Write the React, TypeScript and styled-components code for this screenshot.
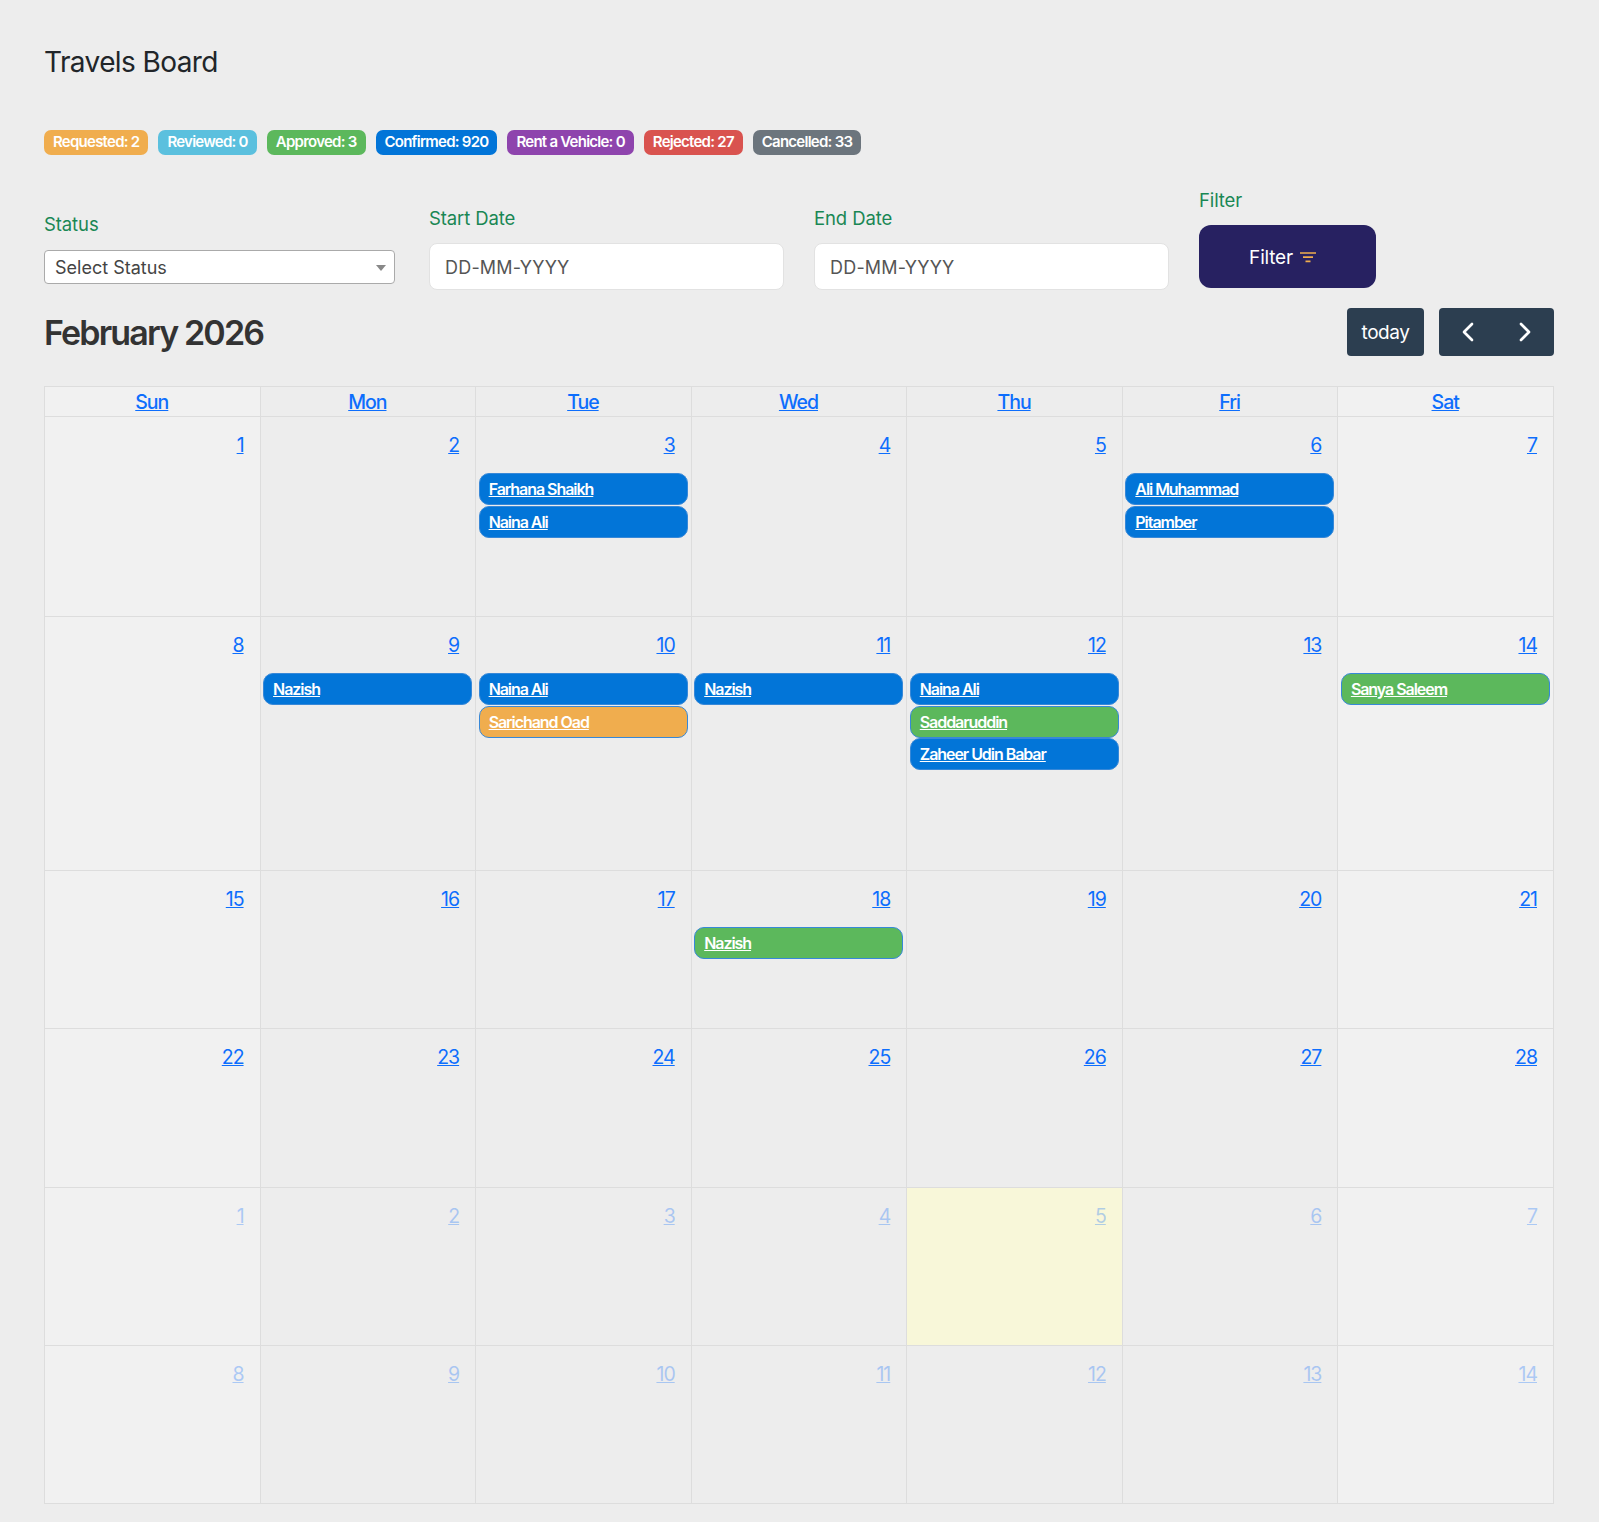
import styled, { createGlobalStyle } from "styled-components";
import { ChevronLeft, ChevronRight } from "lucide-react";

const font = `Inter, "Noto Sans", sans-serif`;

const GlobalStyle = createGlobalStyle`
  html, body {
    margin: 0;
    padding: 0;
    background: #ededed;
  }
  * {
    box-sizing: border-box;
  }
`;

const Page = styled.div`
  height: 1522px;
  padding: 44px 45px 0 44px;
  font-family: ${font};
  color: #212529;
  overflow: hidden;
`;

const Title = styled.h1`
  margin: 0;
  font-size: 28px;
  line-height: 36px;
  font-weight: 400;
  letter-spacing: -0.6px;
`;

const Badges = styled.div`
  display: flex;
  gap: 10px;
  margin-top: 50px;
`;

const Badge = styled.span<{ $bg: string }>`
  height: 25px;
  padding: 0 9px;
  border-radius: 7px;
  background: ${(p) => p.$bg};
  color: #fff;
  font-size: 15px;
  line-height: 24px;
  font-weight: 600;
  letter-spacing: -0.75px;
  white-space: nowrap;
`;

const FilterRow = styled.div`
  display: grid;
  grid-template-columns: 385px 385px 385px 177px;
  align-items: end;
  margin-top: 33px;
`;

const Field = styled.div<{ $drop?: number }>`
  margin-bottom: ${(p) => p.$drop ?? 0}px;
`;

const FieldLabel = styled.label<{ $gap?: number }>`
  display: block;
  margin-bottom: ${(p) => p.$gap ?? 13}px;
  font-size: 18.5px;
  line-height: 24px;
  color: #198754;
  letter-spacing: -0.1px;
`;

const SelectWrap = styled.div`
  position: relative;
  width: 351px;

  &::after {
    content: "";
    position: absolute;
    right: 9px;
    top: 15px;
    border-left: 5px solid transparent;
    border-right: 5px solid transparent;
    border-top: 6px solid #888;
    pointer-events: none;
  }
`;

const Select = styled.select`
  display: block;
  width: 100%;
  height: 34px;
  padding: 0 10px;
  appearance: none;
  background: #fff;
  border: 1px solid #aaa;
  border-radius: 4px;
  font-family: ${font};
  font-size: 18px;
  letter-spacing: 0;
  color: #444;
`;

const DateInput = styled.input`
  display: block;
  width: 355px;
  height: 47px;
  padding: 2px 15px 0;
  background: #fff;
  border: 1px solid #e2e2e2;
  border-radius: 8px;
  font-family: ${font};
  font-size: 18px;
  letter-spacing: 0.2px;
  color: #555;

  &::placeholder {
    color: #555;
    opacity: 1;
  }
`;

const FilterButton = styled.button`
  display: flex;
  align-items: center;
  justify-content: center;
  gap: 7px;
  width: 177px;
  height: 63px;
  padding: 2px 10px 0 0;
  border: none;
  border-radius: 12px;
  background: #272161;
  color: #fff;
  font-family: ${font};
  font-size: 19px;
  letter-spacing: -0.2px;
`;

const Toolbar = styled.div`
  display: flex;
  align-items: center;
  justify-content: space-between;
  margin-top: 18px;
  height: 48px;
`;

const MonthTitle = styled.h2`
  margin: 0;
  padding-top: 2px;
  font-size: 34px;
  line-height: 48px;
  font-weight: 600;
  letter-spacing: -1.85px;
  color: #333;
`;

const ToolbarActions = styled.div`
  display: flex;
  gap: 15px;
`;

const ToolButton = styled.button`
  display: flex;
  align-items: center;
  justify-content: center;
  height: 48px;
  min-width: 77px;
  border: none;
  border-radius: 4px;
  background: #2c3e50;
  color: #fff;
  font-family: ${font};
  font-size: 19px;
  letter-spacing: -0.45px;
`;

const NavGroup = styled.div`
  display: flex;
  width: 115px;
  height: 48px;
  border-radius: 4px;
  background: #2c3e50;
`;

const NavButton = styled.button`
  flex: 1;
  display: flex;
  align-items: center;
  justify-content: center;
  border: none;
  background: none;
  color: #fff;
  padding: 0;
`;

const CalendarTable = styled.table`
  width: 1510px;
  margin-top: 30px;
  border-collapse: collapse;
  table-layout: fixed;
`;

const HeadCell = styled.th<{ $weekend?: boolean }>`
  height: 30px;
  padding: 0 1px 0 0;
  border: 1px solid #ddd;
  background: ${(p) => (p.$weekend ? "#f1f1f1" : "#ededed")};
  font-size: 19.5px;
  line-height: 24px;
  font-weight: 500;
  text-align: center;
`;

const Row = styled.tr<{ $height: number }>`
  height: ${(p) => p.$height}px;
`;

const DayCell = styled.td<{ $weekend?: boolean; $today?: boolean }>`
  padding: 0;
  vertical-align: top;
  border: 1px solid #ddd;
  background: ${(p) =>
    p.$today ? "#f8f7d9" : p.$weekend ? "#f1f1f1" : "#ededed"};
`;

const CalLink = styled.a`
  color: #0d6efd;
  text-decoration: underline;
  letter-spacing: -1px;
`;

const DayTop = styled.div<{ $muted?: boolean }>`
  height: 56px;
  padding: 14px 16px 0 0;
  text-align: right;
  font-size: 19.5px;
  line-height: 28px;
  opacity: ${(p) => (p.$muted ? 0.3 : 1)};
`;

const EventBar = styled.a<{ $bg: string }>`
  display: block;
  height: 32px;
  margin: 0 3px 0.65px 2.5px;
  padding: 0 9px;
  border: 1px solid #3788d8;
  border-radius: 10px;
  background: ${(p) => p.$bg};
  color: #fff;
  font-size: 16px;
  line-height: 30px;
  font-weight: 600;
  letter-spacing: -1.05px;
  text-decoration: underline;
  white-space: nowrap;
  overflow: hidden;
`;

const blue = "#0275d8";
const green = "#5cb85c";
const orange = "#f0ad4e";

const badges = [
  { label: "Requested: 2", bg: orange },
  { label: "Reviewed: 0", bg: "#5bc0de" },
  { label: "Approved: 3", bg: green },
  { label: "Confirmed: 920", bg: blue },
  { label: "Rent a Vehicle: 0", bg: "#8e44ad" },
  { label: "Rejected: 27", bg: "#d9534f" },
  { label: "Cancelled: 33", bg: "#6c757d" },
];

const weekdays = ["Sun", "Mon", "Tue", "Wed", "Thu", "Fri", "Sat"];

type CalEvent = { name: string; bg: string };

const events: Record<number, CalEvent[]> = {
  3: [
    { name: "Farhana Shaikh", bg: blue },
    { name: "Naina Ali", bg: blue },
  ],
  6: [
    { name: "Ali Muhammad", bg: blue },
    { name: "Pitamber", bg: blue },
  ],
  9: [{ name: "Nazish", bg: blue }],
  10: [
    { name: "Naina Ali", bg: blue },
    { name: "Sarichand Oad", bg: orange },
  ],
  11: [{ name: "Nazish", bg: blue }],
  12: [
    { name: "Naina Ali", bg: blue },
    { name: "Saddaruddin", bg: green },
    { name: "Zaheer Udin Babar", bg: blue },
  ],
  14: [{ name: "Sanya Saleem", bg: green }],
  18: [{ name: "Nazish", bg: green }],
};

const rowHeights = [200, 254, 158, 159, 158, 158];

function FunnelLines() {
  return (
    <svg width="16" height="11" viewBox="0 0 16 11" fill="none" stroke="#f0ad4e" strokeWidth="1.7">
      <path d="M0 1h16M3 5.2h10M5.5 9.4h5" />
    </svg>
  );
}

export default function App() {
  return (
    <Page>
      <GlobalStyle />
      <Title>Travels Board</Title>

      <Badges>
        {badges.map((b) => (
          <Badge key={b.label} $bg={b.bg}>
            {b.label}
          </Badge>
        ))}
      </Badges>

      <FilterRow>
        <Field $drop={6}>
          <FieldLabel $gap={14}>Status</FieldLabel>
          <SelectWrap>
            <Select defaultValue="">
              <option value="">Select Status</option>
            </Select>
          </SelectWrap>
        </Field>
        <Field>
          <FieldLabel>Start Date</FieldLabel>
          <DateInput placeholder="DD-MM-YYYY" />
        </Field>
        <Field>
          <FieldLabel>End Date</FieldLabel>
          <DateInput placeholder="DD-MM-YYYY" />
        </Field>
        <Field $drop={2}>
          <FieldLabel>Filter</FieldLabel>
          <FilterButton>
            Filter <FunnelLines />
          </FilterButton>
        </Field>
      </FilterRow>

      <Toolbar>
        <MonthTitle>February 2026</MonthTitle>
        <ToolbarActions>
          <ToolButton>today</ToolButton>
          <NavGroup>
            <NavButton>
              <ChevronLeft size={32} strokeWidth={2} />
            </NavButton>
            <NavButton>
              <ChevronRight size={32} strokeWidth={2} />
            </NavButton>
          </NavGroup>
        </ToolbarActions>
      </Toolbar>

      <CalendarTable>
        <thead>
          <tr>
            {weekdays.map((d, i) => (
              <HeadCell key={d} $weekend={i === 0 || i === 6}>
                <CalLink>{d}</CalLink>
              </HeadCell>
            ))}
          </tr>
        </thead>
        <tbody>
          {rowHeights.map((h, row) => (
            <Row key={row} $height={h}>
              {weekdays.map((_, col) => {
                const n = row * 7 + col + 1;
                const muted = n > 28;
                const day = muted ? n - 28 : n;
                return (
                  <DayCell
                    key={col}
                    $weekend={col === 0 || col === 6}
                    $today={n === 33}
                  >
                    <DayTop $muted={muted}>
                      <CalLink>{day}</CalLink>
                    </DayTop>
                    {!muted &&
                      (events[n] ?? []).map((e) => (
                        <EventBar key={e.name} $bg={e.bg}>
                          {e.name}
                        </EventBar>
                      ))}
                  </DayCell>
                );
              })}
            </Row>
          ))}
        </tbody>
      </CalendarTable>
    </Page>
  );
}
